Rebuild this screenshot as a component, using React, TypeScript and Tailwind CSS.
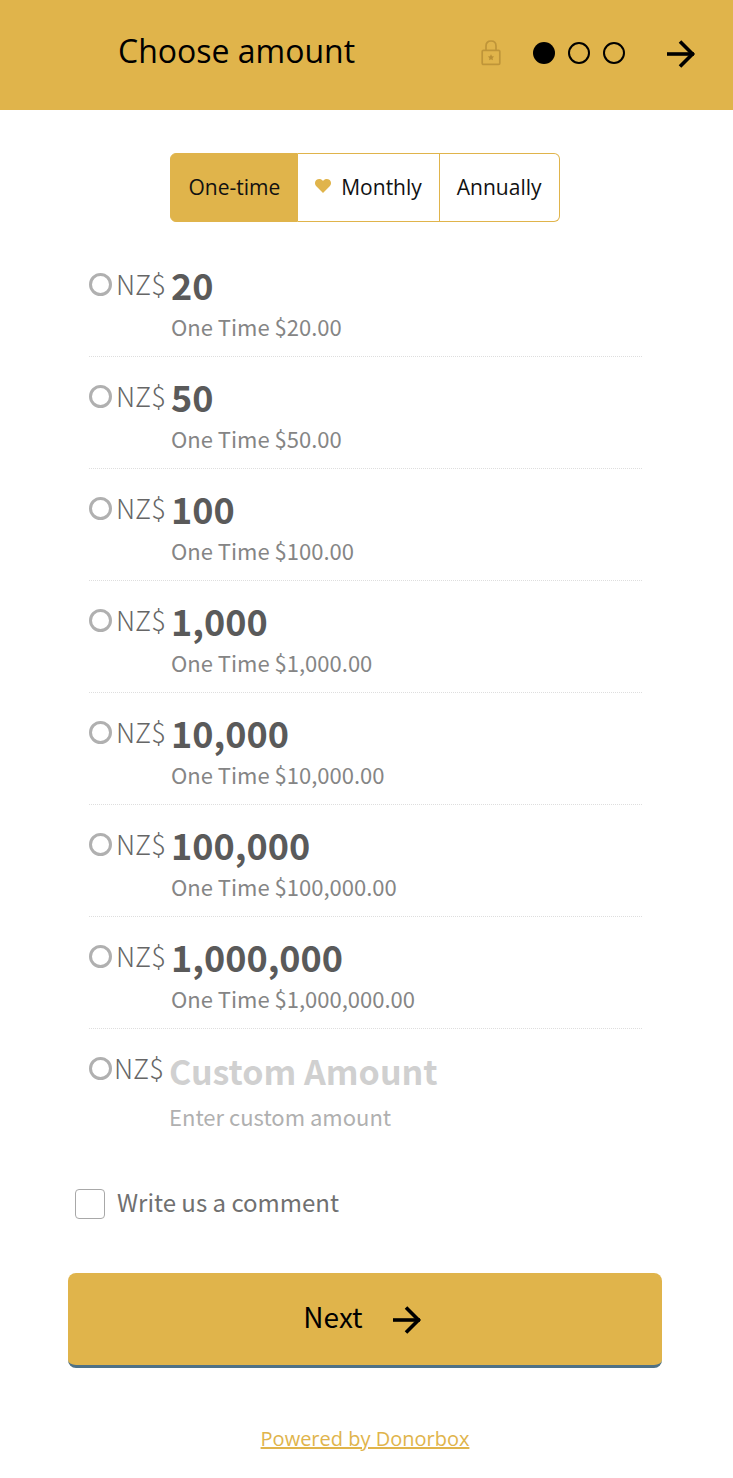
import { useState } from "react";

const plans = [
  { id: "once", label: "One-time" },
  { id: "monthly", label: "Monthly", heart: true },
  { id: "annually", label: "Annually" },
];

const amounts = ["20", "50", "100", "1,000", "10,000", "100,000", "1,000,000"];

function Arrow() {
  return (
    <svg width="30" height="30" viewBox="0 0 30 30" fill="none" stroke="currentColor" strokeWidth="3.6" aria-hidden="true">
      <path d="M0 16H27" />
      <path d="M13 3.5L25.5 16L13 28.5" />
    </svg>
  );
}

function Heart() {
  return (
    <svg width="16" height="18" viewBox="0 0 16 18" fill="#e0b44b" aria-hidden="true">
      <path d="M8 14L1.3 7.3C-.5 5.4-.4 2.6 1.3 1.1C3.2-.5 6.1-.4 8 1.9C9.9-.4 12.8-.5 14.7 1.1C16.4 2.6 16.5 5.4 14.7 7.3Z" />
    </svg>
  );
}

function Lock() {
  return (
    <svg width="20" height="26" viewBox="0 0 20 26" fill="none" stroke="#bf9539" strokeWidth="1.7" aria-hidden="true">
      <rect x="1.2" y="10.4" width="17.6" height="14" rx="1.2" />
      <path d="M5 10.4V6C5 2.8 7 1 10 1S15 2.8 15 6V10.4" />
      <path d="M10 14.2L11 16.2L13.1 16.5L11.6 18L11.9 20.2L10 19.2L8.1 20.2L8.4 18L6.9 16.5L9 16.2Z" fill="#b98f36" stroke="none" />
    </svg>
  );
}

const radioClass =
  "mt-[17px] size-[23px] shrink-0 appearance-none rounded-full border-3 border-[#b0b0b0] bg-white checked:bg-[#e0b44b]";

export default function App() {
  const [plan, setPlan] = useState("once");
  const [amount, setAmount] = useState("");
  const [custom, setCustom] = useState("");

  return (
    <div className="min-h-screen bg-white font-['Noto_Sans_CJK_SC',sans-serif] text-black">
      <header className="flex h-[110px] items-center bg-[#e0b44b] pr-9 pb-1 pl-[118px] font-['Open_Sans',sans-serif]">
        <h1 className="flex-1 pb-1 text-[32px] leading-10">Choose amount</h1>
        <Lock />
        <div className="mr-[42px] ml-8 flex items-center gap-[13px]">
          <span className="size-[22px] rounded-full bg-black" />
          <span className="size-[22px] rounded-full border-2 border-black" />
          <span className="size-[22px] rounded-full border-2 border-black" />
        </div>
        <button type="button" aria-label="Next step">
          <Arrow />
        </button>
      </header>

      <main className="pr-[71px] pl-[68px]">
        {/* Donation interval */}
        <div className="mt-[43px] flex h-[69px] justify-center font-['Open_Sans',sans-serif]">
          {plans.map((p) => (
            <button
              key={p.id}
              type="button"
              onClick={() => setPlan(p.id)}
              className={`flex items-center gap-[10px] border-y border-r border-[#e0b44b] px-[17px] text-[21px] text-[#111] first:rounded-l-md first:border-l last:rounded-r-md ${plan === p.id ? "bg-[#e0b44b]" : "bg-white"}`}
            >
              {p.heart && <Heart />}
              {p.label}
            </button>
          ))}
        </div>

        {/* Amounts */}
        <div className="mt-[23px] pr-5 pl-[21px]">
          {amounts.map((value) => (
            <label
              key={value}
              className="flex h-28 items-start border-b border-dotted border-[#dedede] pt-[11px] text-[#858585]"
            >
              <input
                type="radio"
                name="amount"
                checked={amount === value}
                onChange={() => setAmount(value)}
                className={radioClass}
              />
              <span className="ml-1 w-[55px] pt-2 text-[27px] leading-10 font-light text-[#666]">NZ$</span>
              <span>
                <span className="block pt-1 pb-[2px] text-[36px] leading-12 font-bold text-[#5a5a5a]">{value}</span>
                <span className="block text-[22px] leading-8">One Time ${value}.00</span>
              </span>
            </label>
          ))}
          <div className="flex h-28 items-start pt-[11px]">
            <input
              type="radio"
              name="amount"
              aria-label="Custom amount"
              checked={amount === "custom"}
              onChange={() => setAmount("custom")}
              className={radioClass}
            />
            <span className="ml-[2px] w-[55px] pt-2 text-[27px] leading-10 font-light text-[#666]">NZ$</span>
            <div className="min-w-0 flex-1">
              <input
                id="custom"
                value={custom}
                onChange={(e) => setCustom(e.target.value)}
                placeholder="Custom Amount"
                className="mt-[6px] block h-12 w-full text-[34px] font-bold text-[#5a5a5a] placeholder:text-[#d0d0d0]"
              />
              <label htmlFor="custom" className="mt-[6px] block text-[22px] leading-8 text-[#b0b0b0]">
                Enter custom amount
              </label>
            </div>
          </div>
        </div>

        <label className="mt-[45px] ml-[7px] flex h-9 items-center gap-3 text-2xl text-[#707070]">
          <input
            type="checkbox"
            className="size-[30px] appearance-none rounded-sm border border-[#a8a8a8] checked:bg-[#e0b44b]"
          />
          <span className="pb-1">Write us a comment</span>
        </label>

        <button
          type="button"
          className="mt-[51px] flex h-[95px] w-full items-center justify-center gap-[30px] rounded-lg border-b-3 border-[#4e7186] bg-[#e0b44b] pr-1 text-[28px]"
        >
          <span className="pb-[6px]">Next</span>
          <Arrow />
        </button>

        <p className="mt-[57px] pb-6 text-center font-['Open_Sans',sans-serif] text-[20px] leading-7">
          <a href="#donorbox" className="text-[#e0b44b] underline">
            Powered by Donorbox
          </a>
        </p>
      </main>
    </div>
  );
}
